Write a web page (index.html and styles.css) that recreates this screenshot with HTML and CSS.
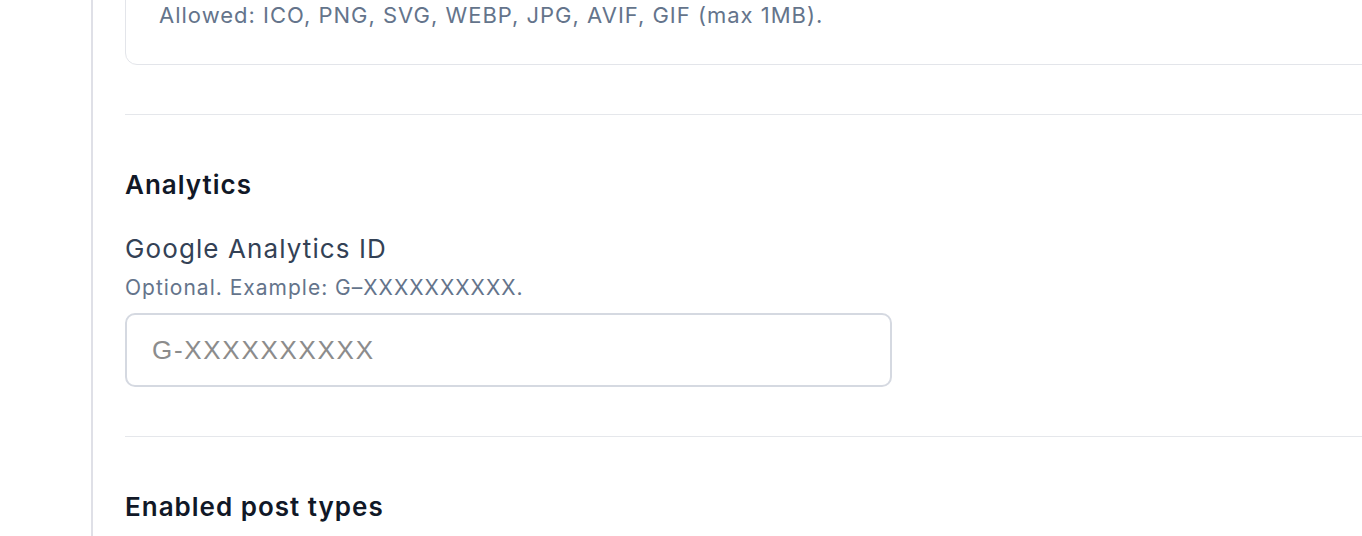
FILE: index.html
```html
<!DOCTYPE html>
<html lang="en">

<head>
  <meta charset="UTF-8">
  <meta name="viewport" content="width=device-width, initial-scale=1.0">
  <title>Settings</title>
  <link rel="stylesheet" href="styles.css">
</head>

<body>
  <div class="layout">
    <aside class="sidebar"></aside>

    <main class="content">
      <div class="upload-card">
        <p class="upload-hint">Allowed: ICO, PNG, SVG, WEBP, JPG, AVIF, GIF (max 1MB).</p>
      </div>

      <hr class="divider">

      <section class="section">
        <h2 class="section-title">Analytics</h2>
        <label class="field-label" for="ga-id">Google Analytics ID</label>
        <p class="field-help">Optional. Example: G–XXXXXXXXXX.</p>
        <input class="text-input" id="ga-id" type="text" placeholder="G-XXXXXXXXXX">
      </section>

      <hr class="divider">

      <section class="section">
        <h2 class="section-title">Enabled post types</h2>
      </section>
    </main>
  </div>
</body>

</html>
```

FILE: styles.css
```css
html, body {
  margin: 0;
  padding: 0;
  background: #fff;
  overflow: hidden;
}

body {
  font-family: Inter, "Noto Sans", sans-serif;
  color: #0f172a;
}

.layout {
  display: flex;
  height: 536px;
}

.sidebar {
  width: 91px;
  flex-shrink: 0;
  border-right: 2px solid #dfe0e7;
}

.content {
  flex: 1;
  padding-left: 32px;
  margin-right: -60px;
}

.upload-card {
  margin-top: -40px;
  border: 1px solid #e3e5ea;
  border-radius: 12px;
  padding: 40px 33px 35px;
}

.upload-hint {
  margin: 0;
  font-size: 22px;
  line-height: 28px;
  letter-spacing: 1px;
  color: #64748b;
}

.divider {
  border: none;
  border-top: 1px solid #e5e7eb;
  margin: 49px 0 0;
}

.section {
  padding-top: 54px;
}

.section-title {
  margin: 0;
  font-size: 26px;
  line-height: 32px;
  font-weight: 600;
  letter-spacing: 1px;
  color: #111827;
}

.field-label {
  display: block;
  margin-top: 32px;
  font-size: 26px;
  line-height: 32px;
  letter-spacing: 1.1px;
  color: #334155;
}

.field-help {
  margin: 9px 0 0;
  font-size: 21px;
  line-height: 28px;
  letter-spacing: 1px;
  color: #64748b;
}

.text-input {
  display: block;
  box-sizing: border-box;
  margin-top: 11px;
  width: 767px;
  height: 74px;
  padding: 0 25px;
  border: 2px solid #d5d9e1;
  border-radius: 10px;
  font-family: "Liberation Sans", Arial, sans-serif;
  font-size: 26px;
  letter-spacing: 1.7px;
  color: #111827;
  outline: none;
}

.text-input::placeholder {
  color: #8c8c8c;
}
```
